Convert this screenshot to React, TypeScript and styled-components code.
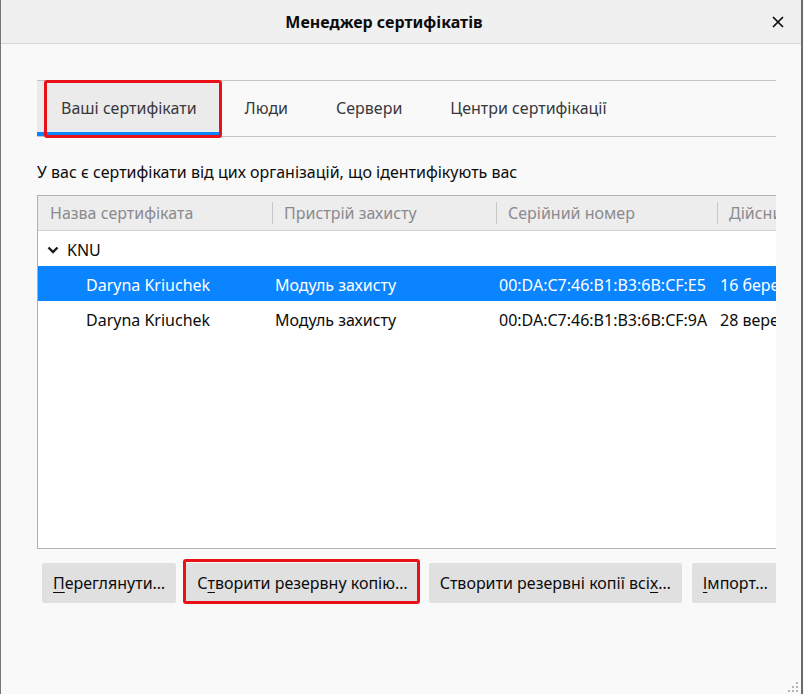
import React from "react";
import styled, { createGlobalStyle } from "styled-components";

const Global = createGlobalStyle`
  html, body { margin: 0; padding: 0; background: #fafafa; }
  body { font-family: "Noto Sans", "Open Sans", sans-serif; color: #0c0c0d; }
  * { box-sizing: border-box; }
`;

const Window = styled.div`
  position: relative;
  width: 803px;
  height: 694px;
  background: #f9f9f9;
  border-left: 1px solid #767676;
  border-right: 2px solid #6b6b6b;
  display: flex;
  flex-direction: column;
  overflow: hidden;
`;

const TitleBar = styled.header`
  flex: none;
  height: 44px;
  display: flex;
  align-items: center;
  background: #f0f0f0;
  border-bottom: 1px solid #d6d6d6;
`;

const Title = styled.h1`
  flex: 1;
  margin: 0;
  text-align: center;
  font-size: 16px;
  font-weight: 700;
  color: #0c0c0d;
`;

const Close = styled.div`
  flex: none;
  width: 34px;
  height: 43px;
  padding-right: 12px;
  display: flex;
  align-items: center;
  justify-content: center;
`;

const Body = styled.main`
  flex: 1;
  min-height: 0;
  padding: 36px 25px 0 36px;
  display: flex;
  flex-direction: column;
`;

const Clip = styled.div`
  flex: 1;
  min-height: 0;
  overflow: hidden;
  display: flex;
  flex-direction: column;
`;

const TabList = styled.nav`
  flex: none;
  display: flex;
  height: 57px;
  border-top: 1px solid #c4c4c4;
  border-bottom: 1px solid #c4c4c4;
`;

const Tab = styled.div<{ $active?: boolean }>`
  position: relative;
  display: flex;
  align-items: center;
  padding: 0 24px 2px;
  font-size: 16px;
  color: #38383d;
  background: ${(p) => (p.$active ? "#ebebeb" : "transparent")};
  box-shadow: ${(p) => (p.$active ? "inset 0 -4px 0 #0a84ff" : "none")};
  white-space: nowrap;
`;

const Highlight = styled.span<{ $inset: string }>`
  position: absolute;
  inset: ${(p) => p.$inset};
  border: 3px solid #ea1018;
  border-radius: 3px;
  pointer-events: none;
`;

const Description = styled.p`
  flex: none;
  margin: 24px 0 12px;
  font-size: 16px;
  line-height: 22px;
  color: #0c0c0d;
  white-space: nowrap;
`;

const Table = styled.div`
  flex: none;
  width: 920px;
  height: 354px;
  border: 1px solid #b1b1b1;
  background: #ffffff;
`;

const columns = "234px 224px 221px 1fr";

const HeaderRow = styled.div`
  display: grid;
  grid-template-columns: ${columns};
  height: 35px;
  background: #ededed;
  border-bottom: 1px solid #cfcfcf;
`;

const HeaderCell = styled.div<{ $sep?: boolean }>`
  position: relative;
  display: flex;
  align-items: center;
  padding-left: 12px;
  font-size: 16px;
  color: #8a8a8e;
  white-space: nowrap;
  &::before {
    content: "";
    display: ${(p) => (p.$sep ? "block" : "none")};
    position: absolute;
    left: 0;
    top: 6px;
    bottom: 6px;
    width: 1px;
    background: #c6c6c6;
  }
`;

const Row = styled.div<{ $selected?: boolean }>`
  display: grid;
  grid-template-columns: ${columns};
  height: 35px;
  background: ${(p) => (p.$selected ? "#0a84ff" : "transparent")};
  color: ${(p) => (p.$selected ? "#ffffff" : "#0c0c0d")};
`;

const Cell = styled.div<{ $indent?: number }>`
  display: flex;
  align-items: center;
  gap: 8px;
  padding-left: ${(p) => p.$indent ?? 3}px;
  padding-top: 2px;
  font-size: 16px;
  white-space: nowrap;
`;

const Actions = styled.div`
  flex: none;
  display: flex;
  margin-top: 14px;
`;

const Button = styled.button`
  position: relative;
  flex: none;
  height: 40px;
  margin: 0 5px;
  padding: 0 11px;
  border: 0;
  border-radius: 2px;
  background: #e0e0e1;
  font-family: inherit;
  font-size: 16px;
  color: #0c0c0d;
  white-space: nowrap;
`;

const Key = styled.span`
  text-decoration: underline;
  text-underline-offset: 3px;
  text-decoration-thickness: 1px;
`;

const Grip = styled.svg`
  position: absolute;
  right: 2px;
  bottom: 1px;
`;

const CloseIcon = () => (
  <svg width="12" height="12" viewBox="0 0 12 12">
    <path d="M1 1 L11 11 M11 1 L1 11" stroke="#0c0c0d" strokeWidth="1.7" />
  </svg>
);

const Chevron = () => (
  <svg width="12" height="8" viewBox="0 0 12 8">
    <path d="M1.5 1.5 L6 6 L10.5 1.5" fill="none" stroke="#1a1a1a" strokeWidth="2.4" />
  </svg>
);

const certs = [
  { name: "Daryna Kriuchek", device: "Модуль захисту", serial: "00:DA:C7:46:B1:B3:6B:CF:E5", date: "16 березня 2025 р.", selected: true },
  { name: "Daryna Kriuchek", device: "Модуль захисту", serial: "00:DA:C7:46:B1:B3:6B:CF:9A", date: "28 вересня 2024 р.", selected: false },
];

export default function App() {
  return (
    <>
      <Global />
      <Window>
        <TitleBar>
          <Title>Менеджер сертифікатів</Title>
          <Close>
            <CloseIcon />
          </Close>
        </TitleBar>
        <Body>
          <Clip>
            <TabList>
              <Tab $active>
                Ваші сертифікати
                <Highlight $inset="-1px -1px -2px 7px" />
              </Tab>
              <Tab>Люди</Tab>
              <Tab>Сервери</Tab>
              <Tab>Центри сертифікації</Tab>
            </TabList>
            <Description>У вас є сертифікати від цих організацій, що ідентифікують вас</Description>
            <Table>
              <HeaderRow>
                <HeaderCell>Назва сертифіката</HeaderCell>
                <HeaderCell $sep>Пристрій захисту</HeaderCell>
                <HeaderCell $sep>Серійний номер</HeaderCell>
                <HeaderCell $sep>Дійсний до</HeaderCell>
              </HeaderRow>
              <Row>
                <Cell $indent={9}>
                  <Chevron />
                  KNU
                </Cell>
                <Cell />
                <Cell />
                <Cell />
              </Row>
              {certs.map((c) => (
                <Row key={c.serial} $selected={c.selected}>
                  <Cell $indent={48}>{c.name}</Cell>
                  <Cell>{c.device}</Cell>
                  <Cell>{c.serial}</Cell>
                  <Cell>{c.date}</Cell>
                </Row>
              ))}
            </Table>
            <Actions>
              <Button>
                <Key>П</Key>ереглянути…
              </Button>
              <Button>
                С<Key>т</Key>ворити резервну копію…
                <Highlight $inset="-4px -1px -1px -3px" />
              </Button>
              <Button>
                Створити резервні копії всі<Key>х</Key>…
              </Button>
              <Button>
                <Key>І</Key>мпорт…
              </Button>
              <Button>
                <Key>В</Key>идалити…
              </Button>
            </Actions>
          </Clip>
        </Body>
        <Grip width="12" height="12" viewBox="0 0 12 12">
          <rect x="9" y="1" width="2" height="2" fill="#b5b5b5" />
          <rect x="5" y="5" width="2" height="2" fill="#b5b5b5" />
          <rect x="9" y="5" width="2" height="2" fill="#b5b5b5" />
          <rect x="1" y="9" width="2" height="2" fill="#b5b5b5" />
          <rect x="5" y="9" width="2" height="2" fill="#b5b5b5" />
          <rect x="9" y="9" width="2" height="2" fill="#b5b5b5" />
        </Grip>
      </Window>
    </>
  );
}
